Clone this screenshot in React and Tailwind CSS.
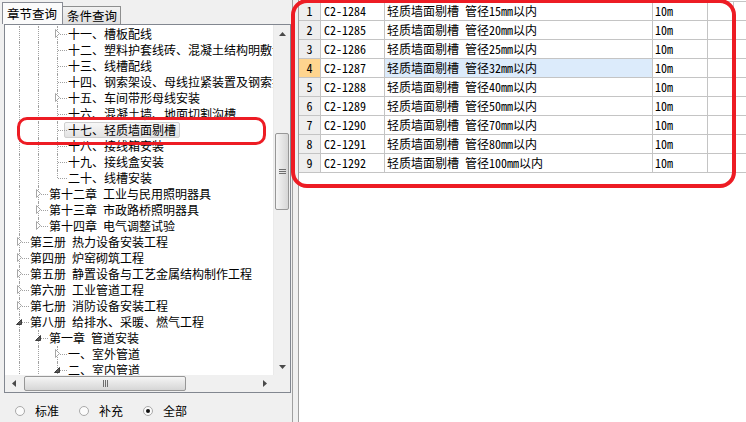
import React from "react";

const tree = [
  { lvl: 2, t: ["十一、槽板配线"], ex: "c" },
  { lvl: 2, t: ["十二、塑料护套线砖、混凝土结构明敷设"] },
  { lvl: 2, t: ["十三、线槽配线"] },
  { lvl: 2, t: ["十四、钢索架设、母线拉紧装置及钢索拉紧装置"] },
  { lvl: 2, t: ["十五、车间带形母线安装"], ex: "c" },
  { lvl: 2, t: ["十六、混凝土墙、地面切割沟槽"] },
  { lvl: 2, t: ["十七、轻质墙面剔槽"], sel: true },
  { lvl: 2, t: ["十八、接线箱安装"] },
  { lvl: 2, t: ["十九、接线盒安装"] },
  { lvl: 2, t: ["二十、线槽安装"], last: true },
  { lvl: 1, t: ["第十二章", "工业与民用照明器具"], ex: "c" },
  { lvl: 1, t: ["第十三章", "市政路桥照明器具"], ex: "c" },
  { lvl: 1, t: ["第十四章", "电气调整试验"], ex: "c", last: true },
  { lvl: 0, t: ["第三册", "热力设备安装工程"], ex: "c" },
  { lvl: 0, t: ["第四册", "炉窑砌筑工程"], ex: "c" },
  { lvl: 0, t: ["第五册", "静置设备与工艺金属结构制作工程"], ex: "c" },
  { lvl: 0, t: ["第六册", "工业管道工程"], ex: "c" },
  { lvl: 0, t: ["第七册", "消防设备安装工程"], ex: "c" },
  { lvl: 0, t: ["第八册", "给排水、采暖、燃气工程"], ex: "e" },
  { lvl: 1, t: ["第一章", "管道安装"], ex: "e" },
  { lvl: 2, t: ["一、室外管道"], ex: "c" },
  { lvl: 2, t: ["二、室内管道"], ex: "e" },
];

const colLeft = ["left-[14px]", "left-[33px]", "left-[52px]"];
const hLeft = ["left-[15px]", "left-[34px]", "left-[53px]"];
const textPad = ["pl-[25px]", "pl-[44px]", "pl-[63px]"];
const collapsedLeft = ["left-[12px]", "left-[31px]", "left-[50px]"];
const expandedLeft = ["left-[11px]", "left-[30px]", "left-[49px]"];

const rows = [
  ["C2-1284", "15"],
  ["C2-1285", "20"],
  ["C2-1286", "25"],
  ["C2-1287", "32"],
  ["C2-1288", "40"],
  ["C2-1289", "50"],
  ["C2-1290", "70"],
  ["C2-1291", "80"],
  ["C2-1292", "100"],
];

function Label({ parts }) {
  return (
    <>
      {parts.map((p, i) => (
        <span key={i} className={i > 0 ? "ml-[6px]" : ""}>
          {p}
        </span>
      ))}
    </>
  );
}

function TreeRow({ item }) {
  const { lvl } = item;
  const ancestors = [];
  for (let c = 0; c < lvl; c++) ancestors.push(c);
  return (
    <div className="relative h-[16px] leading-[16px] whitespace-nowrap">
      {ancestors.map((c) => (
        <span key={c} className={`absolute top-0 bottom-0 border-l border-dotted border-[#a0a0a0] ${colLeft[c]}`} />
      ))}
      <span
        className={`absolute top-0 border-l border-dotted border-[#a0a0a0] ${colLeft[lvl]} ${item.last ? "h-[8px]" : "bottom-0"}`}
      />
      <span className={`absolute top-[8px] w-[9px] border-t border-dotted border-[#a0a0a0] ${hLeft[lvl]}`} />
      {item.ex === "c" && (
        <svg className={`absolute top-[3px] ${collapsedLeft[lvl]}`} width="6" height="9" viewBox="0 0 6 9">
          <polygon points="0.5,0.5 4.5,4.5 0.5,8.5" fill="#ffffff" stroke="#a6a6a6" />
        </svg>
      )}
      {item.ex === "e" && (
        <svg className={`absolute top-[5px] ${expandedLeft[lvl]}`} width="6" height="6" viewBox="0 0 6 6">
          <polygon points="5.5,0.5 5.5,5.5 0.5,5.5" fill="#595959" stroke="#3c3c3c" />
        </svg>
      )}
      <div className={textPad[lvl]}>
        {item.sel ? (
          <span className="inline-block -ml-[4px] px-[3px] h-[16px] leading-[14px] border border-[#cfcfcf] rounded-[2px] bg-gradient-to-b from-[#f7f7f7] to-[#e2e2e2]">
            <Label parts={item.t} />
          </span>
        ) : (
          <Label parts={item.t} />
        )}
      </div>
    </div>
  );
}

function Arrow({ dir }) {
  const pts = {
    up: "3.5,0 7,4 0,4",
    down: "0,0 7,0 3.5,4",
    left: "4,0 4,7 0,3.5",
    right: "0,0 4,3.5 0,7",
  }[dir];
  const vert = dir === "up" || dir === "down";
  return (
    <svg width={vert ? 7 : 4} height={vert ? 4 : 7} viewBox={vert ? "0 0 7 4" : "0 0 4 7"}>
      <polygon points={pts} fill="#4a4a4a" />
    </svg>
  );
}

function Radio({ checked, label, first }) {
  return (
    <div className={`flex items-center ${first ? "ml-[15px]" : "ml-[20px]"}`}>
      <span className="w-[10px] h-[10px] rounded-full border border-[#a9a9a9] bg-[#fbfbfb] flex items-center justify-center">
        {checked && <span className="w-[4px] h-[4px] rounded-full bg-[#111]" />}
      </span>
      <span className="ml-[10px]">{label}</span>
    </div>
  );
}

export default function App() {
  return (
    <div className="relative w-[746px] h-[422px] overflow-hidden flex bg-white text-[12px] text-black font-['Noto_Sans_CJK_SC',sans-serif] [font-feature-settings:'hwid']">
      {/* left: chapter tree */}
      <div className="w-[293px] h-full bg-[#f0f0f0] border-r border-[#a0a0a0] flex flex-col">
        <div className="h-[24px] flex items-end">
          <div className="ml-[2px] w-[61px] h-[22px] border border-b-0 border-[#898c95] bg-[#fbfbfb] pl-[4px] text-[12.5px] leading-[21px]">
            章节查询
          </div>
          <div className="w-[58px] h-[18px] border border-b-0 border-l-0 border-[#8e8f8f] bg-gradient-to-b from-[#f2f2f2] to-[#e0e0e0] pl-[4px] text-[12.5px] leading-[18px]">
            条件查询
          </div>
        </div>
        <div className="ml-[4px] w-[287px] h-[369px] border border-[#828790] bg-white flex flex-col">
          <div className="flex h-[350px]">
            <div className="flex-1 overflow-hidden pt-[1px]">
              {tree.map((item, i) => (
                <TreeRow key={i} item={item} />
              ))}
            </div>
            <div className="w-[17px] flex flex-col bg-[#f0f0f0] border-l border-[#eaeaea]">
              <div className="h-[17px] flex items-center justify-center">
                <Arrow dir="up" />
              </div>
              <div className="h-[91px]" />
              <div className="h-[77px] mx-[1px] rounded-[2px] border border-[#979797] bg-gradient-to-r from-[#f5f5f5] to-[#d6d6d6] flex flex-col items-center justify-center gap-[1px]">
                <span className="w-[7px] h-px bg-[#6e6e6e]" />
                <span className="w-[7px] h-px bg-[#6e6e6e]" />
                <span className="w-[7px] h-px bg-[#6e6e6e]" />
              </div>
              <div className="flex-1" />
              <div className="h-[17px] flex items-center justify-center">
                <Arrow dir="down" />
              </div>
            </div>
          </div>
          <div className="h-[17px] flex bg-[#f0f0f0]">
            <div className="w-[17px] flex items-center justify-center">
              <Arrow dir="left" />
            </div>
            <div className="ml-[2px] w-[162px] my-[1px] rounded-[2px] border border-[#979797] bg-gradient-to-b from-[#f5f5f5] to-[#d6d6d6] flex items-center justify-center gap-[1px]">
              <span className="w-px h-[7px] bg-[#6e6e6e]" />
              <span className="w-px h-[7px] bg-[#6e6e6e]" />
              <span className="w-px h-[7px] bg-[#6e6e6e]" />
            </div>
            <div className="flex-1" />
            <div className="w-[17px] flex items-center justify-center">
              <Arrow dir="right" />
            </div>
            <div className="w-[17px] bg-[#f0f0f0]" />
          </div>
        </div>
        <div className="mt-[9px] h-[18px] flex items-center">
          <Radio first label="标准" />
          <Radio label="补充" />
          <Radio checked label="全部" />
        </div>
      </div>

      <div className="w-[5px] h-full bg-[#f0f0f0]" />

      {/* right: item grid */}
      <div className="flex-1 h-full border-l border-[#a0a0a0] bg-white pt-[1px]">
        {rows.map(([code, size], i) => {
          const sel = i === 3;
          return (
            <div key={code} className={`flex h-[19px] leading-[18px] border-b border-[#c4c4c4] ${i === 0 ? "border-t h-[20px]" : ""}`}>
              <div className={`w-[22px] border-r border-[#c4c4c4] text-center ${sel ? "bg-[#ffd58f]" : "bg-[#eeeeee]"}`}>
                {i + 1}
              </div>
              <div className="w-[64px] border-r border-[#c4c4c4] pl-[3px]">{code}</div>
              <div className={`w-[268px] border-r border-[#c4c4c4] pl-[2px] ${sel ? "bg-[#dcebfb]" : ""}`}>
                轻质墙面剔槽<span className="ml-[6px]">管径{size}mm以内</span>
              </div>
              <div className="w-[55px] border-r border-[#c4c4c4] pl-[2px]">10m</div>
              <div className="w-[26px] border-r border-[#c4c4c4]" />
            </div>
          );
        })}
      </div>

      {/* red annotations */}
      <div className="absolute left-[17px] top-[117px] w-[249px] h-[28px] border-[3px] border-[#ed1c24] rounded-[10px] pointer-events-none" />
      <div className="absolute left-[291px] top-[-1px] w-[445px] h-[189px] border-[4px] border-[#ed1c24] rounded-[16px] pointer-events-none" />
    </div>
  );
}
